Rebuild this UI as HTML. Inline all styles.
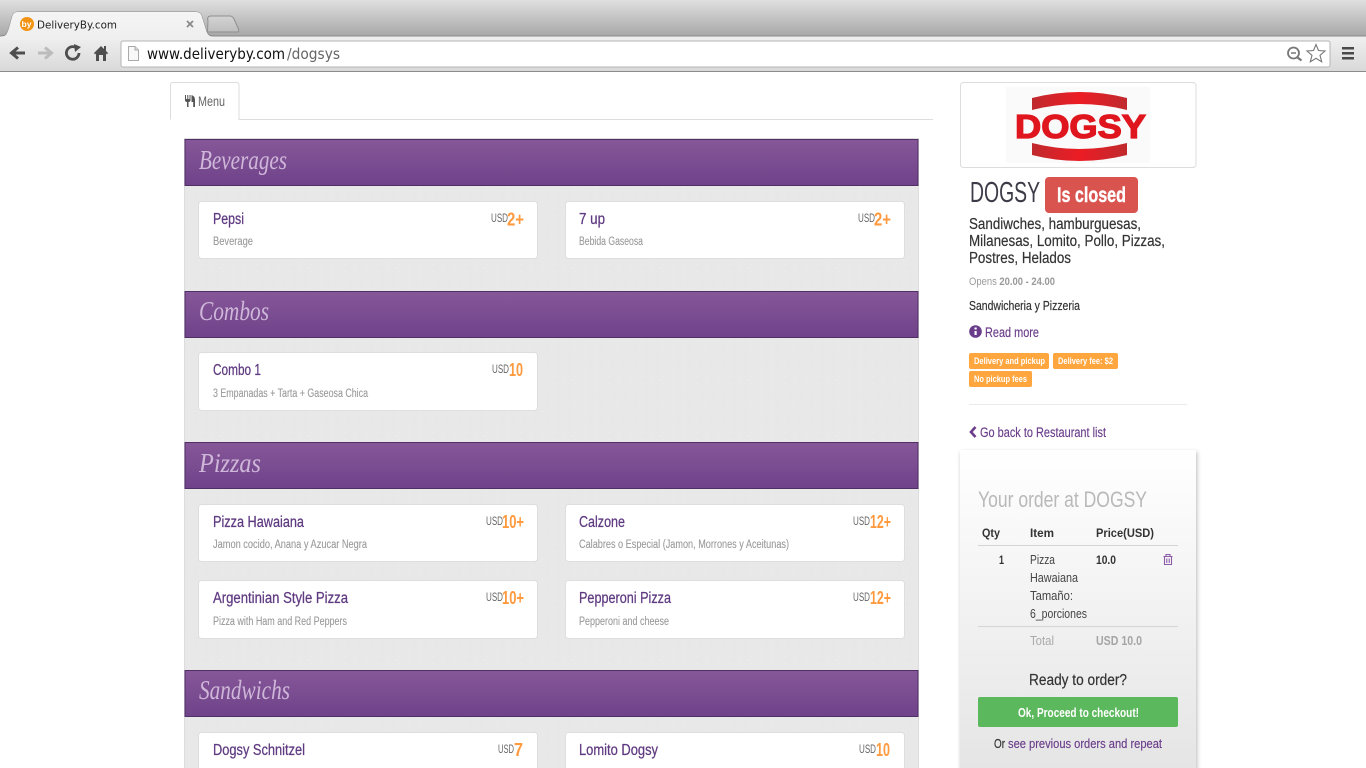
<!DOCTYPE html>
<html><head><meta charset="utf-8"><title>DeliveryBy.com</title>
<style>
html,body{margin:0;padding:0;background:#fff;width:1366px;height:768px;overflow:hidden}
svg{display:block}
text{font-family:"Liberation Sans",sans-serif;white-space:pre}
.ch{font-family:"DejaVu Sans",sans-serif}
.hd{font-family:"Liberation Serif",serif;font-style:italic;font-size:27px;fill:#cfb7d9}
.t{font-size:15.500px;fill:#5f3a80;stroke:#5f3a80;stroke-width:.25px}
.d{font-size:11.500px;fill:#999;stroke:#999;stroke-width:.1px}
.u{font-size:11.500px;fill:#666}
.p{font-size:18px;font-weight:bold;fill:#ff9a3e}
.k{fill:#333;stroke:#333;stroke-width:.2px}
.lb{font-size:9px;font-weight:bold;fill:#fff}
.th{font-size:12px;font-weight:bold;fill:#333}
.td{font-size:12.500px;fill:#444}
.a{fill:#6a3d8a;stroke:#6a3d8a;stroke-width:.15px}
</style></head><body>
<svg width="1366" height="768" viewBox="0 0 1366 768" xmlns="http://www.w3.org/2000/svg">
<defs>
<linearGradient id="top" x1="0" y1="0" x2="0" y2="1"><stop offset="0" stop-color="#e0e0e0"/><stop offset="1" stop-color="#a6a6a6"/></linearGradient>
<linearGradient id="bar" x1="0" y1="0" x2="0" y2="1"><stop offset="0" stop-color="#f0f0f0"/><stop offset="1" stop-color="#d9d9d9"/></linearGradient>
<linearGradient id="tabg" x1="0" y1="0" x2="0" y2="1"><stop offset="0" stop-color="#f5f5f5"/><stop offset="1" stop-color="#efefef"/></linearGradient>
<linearGradient id="ntab" x1="0" y1="0" x2="0" y2="1"><stop offset="0" stop-color="#d4d4d4"/><stop offset="1" stop-color="#bdbdbd"/></linearGradient>
<linearGradient id="pur" x1="0" y1="0" x2="0" y2="1"><stop offset="0" stop-color="#865798"/><stop offset="1" stop-color="#6f428a"/></linearGradient>
<linearGradient id="ord" x1="0" y1="0" x2="0" y2="1"><stop offset="0" stop-color="#ffffff"/><stop offset="1" stop-color="#e4e4e4"/></linearGradient>
<linearGradient id="red" x1="0" y1="0" x2="1" y2="0"><stop offset="0" stop-color="#bf2a2e"/><stop offset=".5" stop-color="#ec1c24"/><stop offset="1" stop-color="#bf2a2e"/></linearGradient>
<pattern id="tex" width="11" height="7" patternUnits="userSpaceOnUse">
<rect width="11" height="7" fill="#e8e8e8"/><rect x="1" y="1" width="1" height="1" fill="#ececec"/><rect x="7" y="3" width="1" height="1" fill="#e5e5e5"/><rect x="3" y="5" width="1" height="1" fill="#ededed"/><rect x="9" y="0" width="1" height="1" fill="#e5e5e5"/>
</pattern>
<filter id="sh" x="-10%" y="-10%" width="120%" height="120%"><feGaussianBlur stdDeviation="2"/></filter>
</defs>

<!-- browser chrome -->
<rect width="1366" height="37" fill="url(#top)"/>
<path d="M207.500 32 C212 32 236 32 238 32 C239 32 239 30 238 28 L234 19 C233 17 232 16 230 16 L211 16 C208 16 207 18 208 21 Z" fill="url(#ntab)" stroke="#8f8f8f"/>
<rect y="36" width="1366" height="35" fill="url(#bar)"/>
<rect y="71" width="1366" height="1" fill="#8b8b8b"/>
<path d="M0 36 C6 36 7 34 9 28 L12 17 C13 13 15 12 18 12 L195 12 C199 12 201 13 202 17 L206 30 C207 34 209 36 213 36 L1366 36" fill="none" stroke="#8a8a8a"/>
<path d="M2 37 C6 36 7 34 9 28 L12 17 C13 13 15 12 18 12 L195 12 C199 12 201 13 202 17 L206 30 C207 34 209 36 212 37 Z" fill="url(#tabg)"/>
<circle cx="27" cy="24" r="7" fill="#f39314"/>
<text x="21.500" y="27" font-size="8" font-weight="bold" fill="#fff" textLength="10" lengthAdjust="spacingAndGlyphs">by</text>
<text class="ch" x="37" y="28.500" font-size="11" fill="#222" textLength="80" lengthAdjust="spacingAndGlyphs">DeliveryBy.com</text>
<path d="M187 21 L193 27 M193 21 L187 27" stroke="#8a8a8a" stroke-width="1.800"/>

<path d="M25 53 H13 M18 47.500 L11.500 53 L18 58.500" fill="none" stroke="#4e4e4e" stroke-width="3"/>
<path d="M38 53 H50 M45 47.500 L51.500 53 L45 58.500" fill="none" stroke="#bcbcbc" stroke-width="3"/>
<path d="M79 53 A6.300 6.300 0 1 1 75.500 47.300" fill="none" stroke="#4e4e4e" stroke-width="2.800"/>
<path d="M74 44 L81 47 L75 52 Z" fill="#4e4e4e"/>
<path d="M94 53 L101 46 L104 49 V46 H106 V51 L108 53 L107 54.500 L106 53.500 V61 H103 V55 H99 V61 H96 V53.500 L95 54.500 Z" fill="#4e4e4e"/>

<rect x="121" y="41" width="1209" height="26" rx="2" fill="#fff" stroke="#b4b4b4"/>
<path d="M128.500 46.500 H135 L138.500 50 V60.500 H128.500 Z" fill="#f8f8f8" stroke="#aaa"/>
<path d="M135 46.500 V50 H138.500" fill="#ddd" stroke="#aaa"/>
<text class="ch" x="147" y="59" font-size="15" fill="#111" textLength="138" lengthAdjust="spacingAndGlyphs">www.deliveryby.com</text>
<text class="ch" x="287" y="59" font-size="15" fill="#666" textLength="53" lengthAdjust="spacingAndGlyphs">/dogsys</text>
<circle cx="1293.500" cy="53" r="5.500" fill="none" stroke="#777" stroke-width="1.800"/>
<path d="M1291 53 H1296" stroke="#777" stroke-width="1.500"/>
<path d="M1297.500 57.500 L1301.500 60.500" stroke="#777" stroke-width="2.200"/>
<path d="M1316 44.500 L1318.500 50.500 L1325 51 L1320 55.300 L1321.700 61.800 L1316 58.300 L1310.300 61.800 L1312 55.300 L1307 51 L1313.500 50.500 Z" fill="#fff" stroke="#777" stroke-width="1.100"/>
<rect x="1342" y="47" width="12" height="2.500" fill="#4a4a4a"/><rect x="1342" y="52" width="12" height="2.500" fill="#4a4a4a"/><rect x="1342" y="57" width="12" height="2.500" fill="#4a4a4a"/>

<!-- tab -->
<path d="M170.500 119.500 V85 Q170.500 82.500 173 82.500 H236.500 Q239 82.500 239 85 V119.500 H933" fill="#fff" stroke="#ddd"/>
<path d="M185 95 V100 Q185 102 187 102 V107 H188.500 V102 Q190.500 102 190.500 100 V95 H189.500 V99 H188.300 V95 H187.300 V99 H186 V95 Z M191.500 95 Q195 96 195 100 V107 H193.200 V102 H191.500 Z" fill="#555"/>
<text x="198" y="106" font-size="13.500" fill="#666" textLength="27" lengthAdjust="spacingAndGlyphs">Menu</text>

<!-- panel -->
<rect x="184.500" y="139" width="734" height="631" fill="url(#tex)"/>
<path d="M184.500 138 V768" stroke="#ddd"/>
<path d="M918.500 138 V768" stroke="#ddd"/>
<path d="M185 138.500 H918" stroke="#ddd"/>

<g fill="url(#pur)" stroke="#4f2f66">
<rect x="185" y="139.500" width="733" height="46"/>
<rect x="185" y="291.500" width="733" height="46"/>
<rect x="185" y="442.500" width="733" height="46"/>
<rect x="185" y="670.500" width="733" height="46"/>
</g>
<text class="hd" x="199" y="169" textLength="88" lengthAdjust="spacingAndGlyphs">Beverages</text>
<text class="hd" x="199" y="320" textLength="70" lengthAdjust="spacingAndGlyphs">Combos</text>
<text class="hd" x="199" y="472" textLength="62" lengthAdjust="spacingAndGlyphs">Pizzas</text>
<text class="hd" x="199" y="699" textLength="91" lengthAdjust="spacingAndGlyphs">Sandwichs</text>

<g fill="#fff" stroke="#dedede">
<rect x="198.500" y="201.500" width="339" height="57" rx="3"/>
<rect x="565.500" y="201.500" width="339" height="57" rx="3"/>
<rect x="198.500" y="352.500" width="339" height="58" rx="3"/>
<rect x="198.500" y="504.500" width="339" height="57" rx="3"/>
<rect x="565.500" y="504.500" width="339" height="57" rx="3"/>
<rect x="198.500" y="580.500" width="339" height="58" rx="3"/>
<rect x="565.500" y="580.500" width="339" height="58" rx="3"/>
<rect x="198.500" y="732.500" width="339" height="60" rx="3"/>
<rect x="565.500" y="732.500" width="339" height="60" rx="3"/>
</g>

<text class="t" x="213" y="224" textLength="31" lengthAdjust="spacingAndGlyphs">Pepsi</text>
<text class="d" x="213" y="245" textLength="40" lengthAdjust="spacingAndGlyphs">Beverage</text>
<text class="u" x="491" y="222" textLength="17" lengthAdjust="spacingAndGlyphs">USD</text>
<text class="p" x="507" y="225.500" textLength="17" lengthAdjust="spacingAndGlyphs">2+</text>

<text class="t" x="579" y="224" textLength="26" lengthAdjust="spacingAndGlyphs">7 up</text>
<text class="d" x="579" y="245" textLength="64" lengthAdjust="spacingAndGlyphs">Bebida Gaseosa</text>
<text class="u" x="858" y="222" textLength="17" lengthAdjust="spacingAndGlyphs">USD</text>
<text class="p" x="874" y="225.500" textLength="17" lengthAdjust="spacingAndGlyphs">2+</text>

<text class="t" x="213" y="375" textLength="48" lengthAdjust="spacingAndGlyphs">Combo 1</text>
<text class="d" x="213" y="397" textLength="155" lengthAdjust="spacingAndGlyphs">3 Empanadas + Tarta + Gaseosa Chica</text>
<text class="u" x="492" y="373" textLength="17" lengthAdjust="spacingAndGlyphs">USD</text>
<text class="p" x="509" y="376" textLength="14" lengthAdjust="spacingAndGlyphs">10</text>

<text class="t" x="213" y="527" textLength="91" lengthAdjust="spacingAndGlyphs">Pizza Hawaiana</text>
<text class="d" x="213" y="548" textLength="154" lengthAdjust="spacingAndGlyphs">Jamon cocido, Anana y Azucar Negra</text>
<text class="u" x="486" y="525" textLength="17" lengthAdjust="spacingAndGlyphs">USD</text>
<text class="p" x="502" y="528" textLength="22" lengthAdjust="spacingAndGlyphs">10+</text>

<text class="t" x="579" y="527" textLength="46" lengthAdjust="spacingAndGlyphs">Calzone</text>
<text class="d" x="579" y="548" textLength="210" lengthAdjust="spacingAndGlyphs">Calabres o Especial (Jamon, Morrones y Aceitunas)</text>
<text class="u" x="853" y="525" textLength="17" lengthAdjust="spacingAndGlyphs">USD</text>
<text class="p" x="870" y="528" textLength="21" lengthAdjust="spacingAndGlyphs">12+</text>

<text class="t" x="213" y="603" textLength="135" lengthAdjust="spacingAndGlyphs">Argentinian Style Pizza</text>
<text class="d" x="213" y="625" textLength="134" lengthAdjust="spacingAndGlyphs">Pizza with Ham and Red Peppers</text>
<text class="u" x="486" y="601" textLength="17" lengthAdjust="spacingAndGlyphs">USD</text>
<text class="p" x="502" y="604" textLength="22" lengthAdjust="spacingAndGlyphs">10+</text>

<text class="t" x="579" y="603" textLength="92" lengthAdjust="spacingAndGlyphs">Pepperoni Pizza</text>
<text class="d" x="579" y="625" textLength="90" lengthAdjust="spacingAndGlyphs">Pepperoni and cheese</text>
<text class="u" x="853" y="601" textLength="17" lengthAdjust="spacingAndGlyphs">USD</text>
<text class="p" x="870" y="604" textLength="21" lengthAdjust="spacingAndGlyphs">12+</text>

<text class="t" x="213" y="755" textLength="92" lengthAdjust="spacingAndGlyphs">Dogsy Schnitzel</text>
<text class="u" x="498" y="753" textLength="16" lengthAdjust="spacingAndGlyphs">USD</text>
<text class="p" x="514" y="756" textLength="9" lengthAdjust="spacingAndGlyphs">7</text>
<text class="t" x="579" y="755" textLength="79" lengthAdjust="spacingAndGlyphs">Lomito Dogsy</text>
<text class="u" x="859" y="753" textLength="17" lengthAdjust="spacingAndGlyphs">USD</text>
<text class="p" x="876" y="756" textLength="14" lengthAdjust="spacingAndGlyphs">10</text>

<!-- sidebar -->
<rect x="960.500" y="82.500" width="235.500" height="85" rx="3" fill="#fff" stroke="#ddd"/>
<rect x="1006" y="87" width="144" height="76" fill="#fafafa"/>
<path d="M1032 98 Q1079.500 86 1127 98 V110 Q1079.500 98 1032 110 Z" fill="url(#red)"/>
<path d="M1032 143 Q1079.500 155 1127 143 V155 Q1079.500 167 1032 155 Z" fill="url(#red)"/>
<text x="1015" y="138" font-size="33" font-weight="bold" fill="#e0161f" stroke="#e0161f" stroke-width="1.300" textLength="131" lengthAdjust="spacingAndGlyphs">DOGSY</text>

<text x="970" y="202" font-size="29" fill="#3c3c48" textLength="70" lengthAdjust="spacingAndGlyphs">DOGSY</text>
<rect x="1045" y="177" width="93" height="36" rx="4" fill="#d9534f"/>
<text x="1057" y="202" font-size="21" font-weight="bold" fill="#fff" stroke="#fff" stroke-width=".4" textLength="69" lengthAdjust="spacingAndGlyphs">Is closed</text>

<text class="k" x="969" y="229" font-size="15.500" textLength="172" lengthAdjust="spacingAndGlyphs">Sandiwches, hamburguesas,</text>
<text class="k" x="969" y="246" font-size="15.500" textLength="196" lengthAdjust="spacingAndGlyphs">Milanesas, Lomito, Pollo, Pizzas,</text>
<text class="k" x="969" y="263" font-size="15.500" textLength="102" lengthAdjust="spacingAndGlyphs">Postres, Helados</text>
<text x="969" y="285" font-size="11" fill="#9a9a9a" textLength="86" lengthAdjust="spacingAndGlyphs">Opens <tspan font-weight="bold">20.00 - 24.00</tspan></text>
<text class="k" x="969" y="310" font-size="13" textLength="111" lengthAdjust="spacingAndGlyphs">Sandwicheria y Pizzeria</text>

<circle cx="975.500" cy="331.500" r="6.300" fill="#6a3d8a"/>
<rect x="974.500" y="331" width="2.200" height="4" fill="#fff"/><rect x="974.500" y="327.500" width="2.200" height="2" fill="#fff"/>
<text class="a" x="985" y="337" font-size="13.500" textLength="54" lengthAdjust="spacingAndGlyphs">Read more</text>

<g fill="#ffa63f">
<rect x="969" y="353" width="80" height="16" rx="2"/>
<rect x="1053" y="353" width="65" height="16" rx="2"/>
<rect x="969" y="371" width="63" height="16" rx="2"/>
</g>
<text class="lb" x="974" y="364" textLength="71" lengthAdjust="spacingAndGlyphs">Delivery and pickup</text>
<text class="lb" x="1058" y="364" textLength="55" lengthAdjust="spacingAndGlyphs">Delivery fee: $2</text>
<text class="lb" x="974" y="382" textLength="53" lengthAdjust="spacingAndGlyphs">No pickup fees</text>

<rect x="969" y="404" width="218" height="1" fill="#eaeaea"/>

<path d="M975.500 427 L971 432 L975.500 437" fill="none" stroke="#6a3d8a" stroke-width="2.600"/>
<text class="a" x="980" y="437" font-size="13.500" textLength="126" lengthAdjust="spacingAndGlyphs">Go back to Restaurant list</text>

<rect x="961" y="452" width="236" height="330" fill="#888" opacity=".6" filter="url(#sh)"/>
<rect x="960" y="450" width="236" height="330" fill="url(#ord)"/>
<text x="978" y="507" font-size="22" fill="#b9b9b9" textLength="169" lengthAdjust="spacingAndGlyphs">Your order at DOGSY</text>

<text class="th" x="982" y="537" textLength="18" lengthAdjust="spacingAndGlyphs">Qty</text>
<text class="th" x="1030" y="537" textLength="24" lengthAdjust="spacingAndGlyphs">Item</text>
<text class="th" x="1096" y="537" textLength="58" lengthAdjust="spacingAndGlyphs">Price(USD)</text>
<rect x="978" y="545" width="200" height="1" fill="#d5d5d5"/>

<text class="th" x="999" y="564" textLength="5" lengthAdjust="spacingAndGlyphs">1</text>
<text class="td" x="1030" y="564" textLength="25" lengthAdjust="spacingAndGlyphs">Pizza</text>
<text class="td" x="1030" y="582" textLength="48" lengthAdjust="spacingAndGlyphs">Hawaiana</text>
<text class="td" x="1030" y="600" textLength="43" lengthAdjust="spacingAndGlyphs">Tamaño:</text>
<text class="td" x="1030" y="618" textLength="57" lengthAdjust="spacingAndGlyphs">6_porciones</text>
<text class="th" x="1096" y="564" textLength="20" lengthAdjust="spacingAndGlyphs">10.0</text>
<path d="M1163.500 556.500 H1172.500 M1166 556 V554.500 H1170 V556 M1164.500 557 V564.500 H1171.500 V557 M1166.800 558.500 V563 M1169.200 558.500 V563" fill="none" stroke="#8c5ba6" stroke-width="1.100"/>
<rect x="978" y="626" width="200" height="1" fill="#d5d5d5"/>
<text x="1030" y="645" font-size="12.500" fill="#aaa" textLength="24" lengthAdjust="spacingAndGlyphs">Total</text>
<text x="1096" y="645" font-size="12.500" font-weight="bold" fill="#a5a5a5" textLength="46" lengthAdjust="spacingAndGlyphs">USD 10.0</text>

<text class="k" x="1029" y="685" font-size="15.500" textLength="98" lengthAdjust="spacingAndGlyphs">Ready to order?</text>
<rect x="978" y="697" width="200" height="30" rx="2" fill="#5cb85c"/>
<text x="1018" y="717" font-size="13" font-weight="bold" fill="#fff" textLength="121" lengthAdjust="spacingAndGlyphs">Ok, Proceed to checkout!</text>
<text class="k" x="994" y="748" font-size="12.500" textLength="11" lengthAdjust="spacingAndGlyphs">Or</text>
<text class="a" x="1008" y="748" font-size="12.500" textLength="154" lengthAdjust="spacingAndGlyphs">see previous orders and repeat</text>
</svg>
</body></html>
